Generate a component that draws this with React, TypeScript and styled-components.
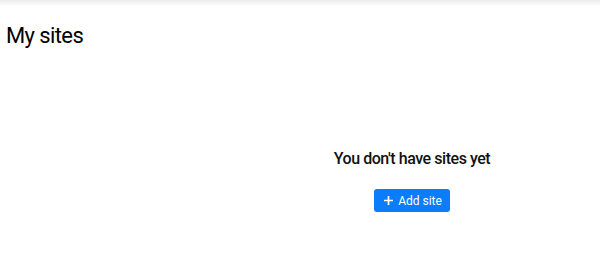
import { createGlobalStyle, styled } from 'styled-components';

const GlobalStyle = createGlobalStyle`
  html, body {
    margin: 0;
    padding: 0;
    background: #ffffff;
    font-family: Roboto, "Liberation Sans", Arial, sans-serif;
  }
`;

//------PAGE-----

const Page = styled.div`
  width: 600px;
  height: 273px;
  position: relative;
  overflow: hidden;
  background: #ffffff;
`;

const TopShadow = styled.div`
  height: 6px;
  background: linear-gradient(180deg, #ebebeb 0%, #ffffff 100%);
`;

const Title = styled.h1`
  margin: 17px 0 0 6px;
  font-size: 22px;
  line-height: 26px;
  font-weight: 400;
  letter-spacing: -0.6px;
  color: #000000;
`;

//------EMPTY STATE-----

const EmptyArea = styled.div`
  display: grid;
  grid-template-columns: 224px 1fr;
  margin-top: 100px;
`;

const EmptyState = styled.div`
  grid-column: 2;
  display: flex;
  flex-direction: column;
  align-items: center;
  gap: 20px;
`;

const EmptyText = styled.h2`
  margin: 0;
  font-size: 16px;
  line-height: 20px;
  font-weight: 500;
  letter-spacing: -0.45px;
  color: #111111;
`;

const AddButton = styled.button`
  display: flex;
  align-items: center;
  justify-content: center;
  gap: 4px;
  width: 76px;
  height: 23px;
  padding: 0 0 0 1px;
  border: none;
  border-radius: 3px;
  background: #0b7dfb;
  color: #ffffff;
  font-family: inherit;
  font-size: 12px;
  font-weight: 400;
  cursor: pointer;
`;

const PlusIcon = () => (
  <svg width="11" height="11" viewBox="0 0 11 11" aria-hidden="true">
    <path d="M5.5 1v9M1 5.5h9" stroke="#ffffff" strokeWidth="1.7" />
  </svg>
);

export default function App() {
  return (
    <Page>
      <GlobalStyle />
      <TopShadow />
      <Title>My sites</Title>
      <EmptyArea>
        <EmptyState>
          <EmptyText>You don't have sites yet</EmptyText>
          <AddButton>
            <PlusIcon />
            Add site
          </AddButton>
        </EmptyState>
      </EmptyArea>
    </Page>
  );
}
